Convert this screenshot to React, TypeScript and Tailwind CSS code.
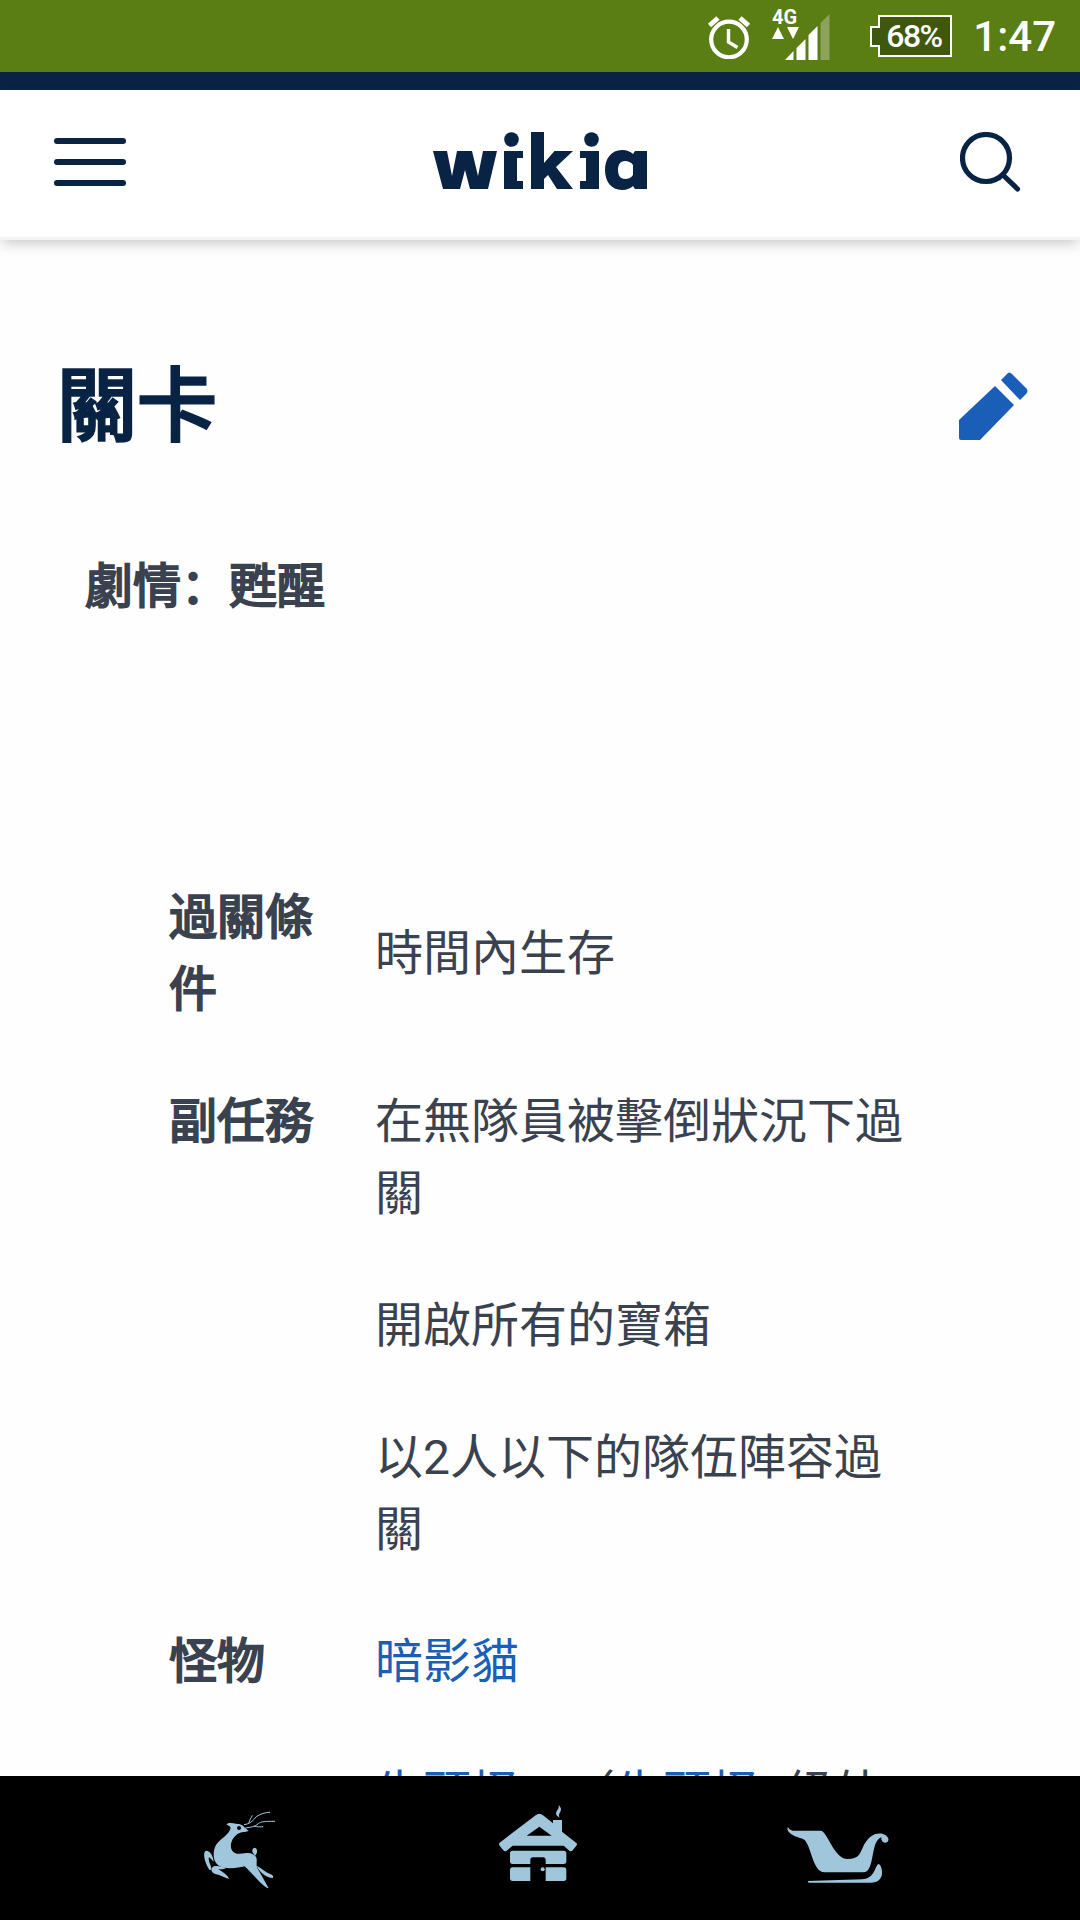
import type { ReactNode } from "react";

const rows: { label?: string; value: ReactNode }[] = [
  { label: "過關條件", value: "時間內生存" },
  { label: "副任務", value: "在無隊員被擊倒狀況下過關" },
  { value: "開啟所有的寶箱" },
  { value: "以2人以下的隊伍陣容過關" },
  { label: "怪物", value: <Link>暗影貓</Link> },
  {
    value: (
      <>
        <Link>牛頭怪</Link>
        {"　（"}
        <Link>牛頭怪</Link>
        2級外
      </>
    ),
  },
];

function Link({ children }: { children: ReactNode }) {
  return (
    <a href="#" className="text-[#1a5eb8]">
      {children}
    </a>
  );
}

function StatusBar() {
  return (
    <div className="h-18 shrink-0 bg-[#5a7d14] flex items-center justify-end text-white font-medium">
      <svg width="44" height="44" viewBox="0 0 44 44" fill="none" stroke="white" className="mr-[21px] mt-px">
        <circle cx="22" cy="24.5" r="17.8" strokeWidth="4.2" />
        <path d="M21.5 14v13l9 5.5" strokeWidth="3.4" />
        <path d="M2.5 10.5 11 3M41.500 10.500 33 3" strokeWidth="5" />
      </svg>
      <svg width="58" height="60" viewBox="0 -6 58 60" fill="white" className="mr-10 mb-2.5">
        <text x="0" y="17" fontSize="20" fontWeight="700" fontFamily="Roboto, sans-serif">4G</text>
        <path d="M0 32 6 20l6 12zM15 20h12l-6 12z" />
        <path d="M13 53l8.500-9v9zM24.500 41l9-9v21h-9zM36.500 28l9-9v34h-9z" />
        <path d="M48.500 16l9-9v46h-9z" opacity=".3" />
      </svg>
      <div className="relative mr-[21px] w-[82px] h-[43px]">
        <svg width="82" height="43" viewBox="0 0 82 43" className="absolute inset-0">
          <path d="M9 1h72v40H9V31H1V12h8z" fill="#3f580e" stroke="white" strokeWidth="2" />
        </svg>
        <span className="relative block pl-[16px] text-[32px] leading-[43px] tracking-[-1.6px]">68%</span>
      </div>
      <span className="text-[42px] leading-none mr-6 pt-0.5">1:47</span>
    </div>
  );
}

function WikiaLogo() {
  return (
    <svg width="216" height="60" viewBox="-1 0 216 60" fill="#092344" role="img" aria-label="wikia">
      <path d="M0 19h14l5 25 5-25h15l6 25 5-25h14l-9 38H37l-5-19-5 19H10z" />
      <circle cx="78.500" cy="7.500" r="7.300" />
      <path d="M71 19h19v7h-6v23h6v8H71z" />
      <path d="M98 0h13v31l10.500-12H140l-17 16 17 22h-16l-9-14-4 4v10H98z" />
      <circle cx="158.500" cy="7.500" r="7.300" />
      <path d="M147 19h19v38h-19v-8h6V26h-6z" />
      <path
        fillRule="evenodd"
        d="M189 18c5 0 9 2 11 4l2-3h12v38h-12l-2-3c-2 2-6 4-11 4-11 0-17-9-17-20s6-20 17-20zm3 11c-5 0-7 4-7 9s2 9 7 9c3 0 6-1 8-4V33c-2-3-5-4-8-4z"
      />
    </svg>
  );
}

function Header() {
  return (
    <header className="relative h-[150px] shrink-0 bg-white border-b-3 border-[#f5f5f5] px-[54px] pb-[3px] flex items-center justify-between text-[#092344] shadow-[0_6px_12px_-2px_rgba(0,0,0,0.2)]">
      <button className="w-18 flex flex-col gap-[15px]" aria-label="menu">
        <span className="h-1.5 rounded-full bg-[#092344]" />
        <span className="h-1.5 rounded-full bg-[#092344]" />
        <span className="h-1.5 rounded-full bg-[#092344]" />
      </button>
      <WikiaLogo />
      <button className="w-18 flex justify-center" aria-label="search">
        <svg width="60" height="60" viewBox="0 0 60 60" fill="none" stroke="currentColor" strokeWidth="5.200">
          <circle cx="26" cy="26" r="23.500" />
          <path d="M43.500 43.500 57.500 57" strokeLinecap="round" />
        </svg>
      </button>
    </header>
  );
}

function NavBar() {
  return (
    <nav className="h-36 shrink-0 bg-black flex items-center justify-between px-[180px] pb-2 text-[#a0c6dc]">
      {/* reindeer */}
      <svg width="120" height="130" viewBox="0 0 360 390" fill="currentColor">
        <path d="M139 136c6-6 20-3 29-2 12 0 21 4 25 11l13 11-12 3c-6 0-12 1-17 4-20 10-29 35-22 49 8 16 25 13 44 10 17-2 30 7 31 18 1 12-2 18 2 27l34 61c-13 0-50-45-72-66-24 6-58 9-77-2-20-12-18-41-11-58 8-20 42-33 46-56-2-5-9-7-13-10z" />
        <path d="M101 248c-2-18-11-34-23-33-12 5-3 39 11 58 7 0 5-9 2-16-4-9-6-17-4-22 4 2 8 8 14 13zM96 266c10-10 32-2 43 1-7 4-16 4-24 4 13 8 27 17 33 28-13-1-27-11-42-14-10-3-15-11-10-19zM230 260c16 9 28 20 42 26 8 3 9 8 6 11-18-2-38-14-48-37zM217 219c-1-11 6-16 12-10 5 7 1 17-4 21z" />
        <path d="M192 137c18-2 27-12 37-24 13-8 25-13 41-13M207 132c1-9 6-14 10-23M196 147c18-3 29-3 39-13 8-7 22-7 50-7M222 141c10 3 19 3 28 2" fill="none" stroke="currentColor" strokeWidth="3" />
        <circle cx="177" cy="147" r="6" fill="black" />
      </svg>
      {/* cabin */}
      <svg width="120" height="130" viewBox="0 0 360 390" fill="currentColor">
        <path fillRule="evenodd" d="M167 109q11-9 22 0l30 24v-10h27v35l43 34q4 3 0 8l-11 14q-5 5-10 1l-17-15H98l-18 15q-5 4-10-1l-11-14q-4-5 0-9zM178 143l-38 27h75z" />
        <path d="M98 215h153q8 0 8 8v24q0 8-8 8h-54v-12q0-8-8-8h-30q-8 0-8 8v12H98q-8 0-8-8v-24q0-8 8-8zM98 265h53v41H98q-8 0-8-8v-25q0-8 8-8zM197 265h54q8 0 8 8v25q0 8-8 8h-54z" />
        <circle cx="188" cy="271" r="6" />
        <path d="M236 78c12 12 6 18 2 26-2 5-1 8 1 12-16-9-11-17-5-25 2-4 3-8 2-13z" />
      </svg>
      {/* sleigh */}
      <svg width="120" height="130" viewBox="0 0 360 390" fill="currentColor">
        <path d="M24 144c6 14 20 11 36 11h62c20 1 40 85 81 85 34-1 35-14 45-34 15-34 38-47 61-41 15 5 20 17 14 23-8 7-20 3-19-13-34 10-18 106-54 105H134c-39 0-40-94-67-101-17-4-52-18-43-35z" />
        <path d="M83 306l163-5c40-1 40-46 50-46 7 0 14 26 8 38-8 16-20 18-38 18H86z" />
      </svg>
    </nav>
  );
}

export default function App() {
  return (
    <div
      lang="zh-Hans"
      className="w-[1080px] h-[1920px] flex flex-col overflow-hidden bg-[#fefefe] text-[#3a424f] font-[Roboto,'Noto_Sans_CJK_SC',sans-serif] [text-spacing-trim:space-all]"
    >
      <StatusBar />
      <div className="h-4.5 shrink-0 bg-[#092344]" />
      <Header />

      <main className="flex-1 min-h-0 overflow-hidden">
        <div className="flex items-center justify-between pl-[57px] pr-[52px] pt-[107px]">
          <h1 className="text-[80px] leading-[120px] text-[#092344] [-webkit-text-stroke:3.300px_#092344]">關卡</h1>
          <svg width="69" height="69" viewBox="0 0 69 69" fill="#1a5eb8" className="mb-0.5">
            <path d="M36 14 55 33 21 68H2q-2 0-2-2V48zM42 8l6-6q2-3 5 0l14 14q3 3 0 6l-6 6z" />
          </svg>
        </div>
        <h2 className="pl-[85px] pt-[84px] text-[48px] leading-[72px] [-webkit-text-stroke:2px_#3a424f]">劇情：甦醒</h2>

        <table className="ml-[138px] mt-[229px] w-[796px] table-fixed text-[48px] leading-[72px]">
          <tbody>
            {rows.map((row, i) => (
              <tr key={i}>
                <th className="w-[207px] pl-[31px] pr-[29px] py-[30px] text-left align-top font-normal [-webkit-text-stroke:2px_#3a424f]">
                  {row.label}
                </th>
                <td className="px-[30px] py-[30px] align-middle">{row.value}</td>
              </tr>
            ))}
          </tbody>
        </table>
      </main>

      <NavBar />
    </div>
  );
}
